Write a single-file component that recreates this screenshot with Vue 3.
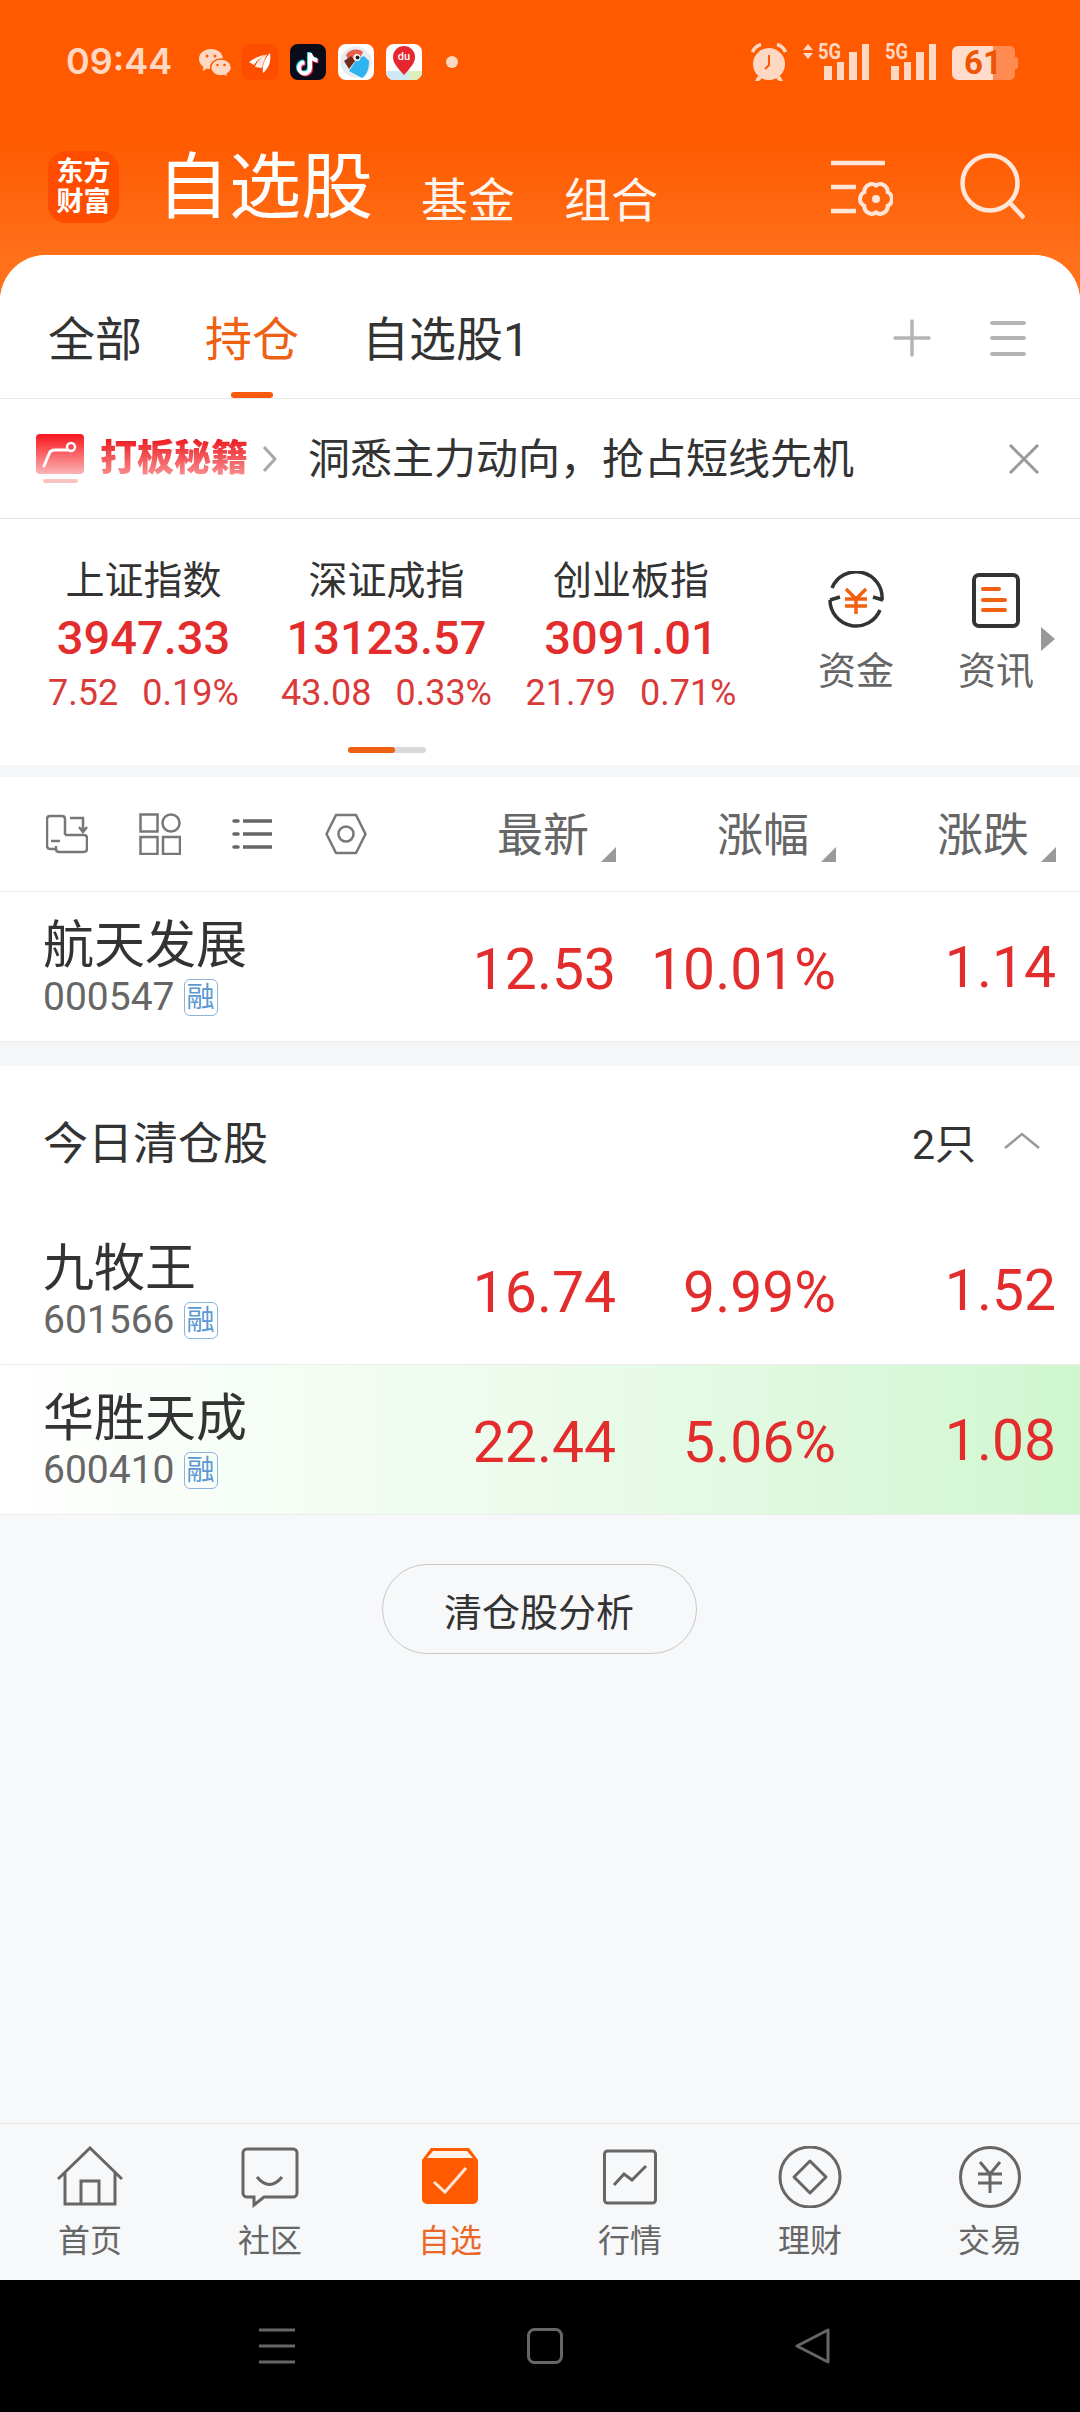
<template>
<div class="page">
    <header class="hero">
        <div class="status">
            <span class="time">09:44</span>
            <svg class="wechat" viewBox="0 0 34 30" width="34" height="30">
                <path d="M13 1C6 1 1 5.400 1 11c0 3.200 1.700 6 4.400 7.800L4.600 23l4.300-2.400c1.300.4 2.700.6 4.100.6 7 0 12-4.600 12-10.200S20 1 13 1z" fill="#ffd8c4"/>
                <path d="M23 11c-5.800 0-10.400 3.900-10.400 8.500S17.200 28 23 28c1.100 0 2.200-.2 3.200-.5l3.800 2-.8-3.500c2.600-1.600 4.300-3.900 4.300-6.500C33.500 14.900 28.800 11 23 11z" fill="#ffd8c4" stroke="#ff5a00" stroke-width="1.500"/>
                <circle cx="9" cy="8" r="1.500" fill="#ff5a00"/>
                <circle cx="17" cy="8" r="1.500" fill="#ff5a00"/>
                <circle cx="19.500" cy="17" r="1.300" fill="#ff5a00"/>
                <circle cx="26.500" cy="17" r="1.300" fill="#ff5a00"/>
            </svg>
            <svg class="tile" viewBox="0 0 36 36" width="36" height="36">
                <rect width="36" height="36" rx="8" fill="#ff4d00"/>
                <path d="M7 18c5-4 10-6 16-7-4 2-8 5-11 10z" fill="#fff"/>
                <path d="M13 23c2-6 6-10 12-13-2 4-4 9-5 14z" fill="#ffe9df"/>
                <path d="M21 29c-1-7 1-14 7-20 1 7 0 14-7 20z" fill="#fff"/>
            </svg>
            <svg class="tile" viewBox="0 0 36 36" width="36" height="36">
                <rect width="36" height="36" rx="8" fill="#0b0c1a"/>
                <path d="M19 8v15a5.500 5.500 0 1 1-5.500-5.500M19 9c1 4 4 6 7.500 6.500" fill="none" stroke="#25e3ea" stroke-width="4"/>
                <path d="M21 10v15a5.500 5.500 0 1 1-5.500-5.500M21 11c1 4 4 6 7.500 6.500" fill="none" stroke="#f5305c" stroke-width="4"/>
                <path d="M20 9v15a5.500 5.500 0 1 1-5.500-5.500M20 10c1 4 4 6 7.500 6.500" fill="none" stroke="#fff" stroke-width="4"/>
            </svg>
            <svg class="tile" viewBox="0 0 36 36" width="36" height="36">
                <rect width="36" height="36" rx="8" fill="#fff"/>
                <circle cx="18" cy="18" r="15.500" fill="#e6ebef"/>
                <path d="M8 11c4-6 12-7 17-3l-4 8-9 3z" fill="#e8604c"/>
                <path d="M6 17l7-5 4 5-6 8z" fill="#6e2a1c"/>
                <path d="M11 27l8-12 7-3 5 5c0 9-3 15-7 17z" fill="#2eb4ee"/>
                <circle cx="19" cy="13.500" r="3.500" fill="#fff"/>
                <circle cx="19.500" cy="13.500" r="2" fill="#1d2430"/>
            </svg>
            <svg class="tile" viewBox="0 0 36 36" width="36" height="36">
                <rect width="36" height="36" rx="8" fill="#fff"/>
                <path d="M0 27h36v1a8 8 0 0 1-8 8H8a8 8 0 0 1-8-8z" fill="#cfe8f6"/>
                <path d="M23 27h13v1a8 8 0 0 1-8 8h-5z" fill="#dcefb8"/>
                <path d="M18 31C11 23 7 19 7 13a11 11 0 0 1 22 0c0 6-4 10-11 18z" fill="#e8262f"/>
                <text x="18" y="16" text-anchor="middle" class="du">du</text>
            </svg>
            <span class="dot"></span>

            <div class="status-right">
                <svg viewBox="0 0 36 38" width="36" height="38">
                    <circle cx="18" cy="21" r="16" fill="#ffd8c4"/>
                    <path d="M1.500 9Q4 3 10 1.500M34.500 9Q32 3 26 1.500" fill="none" stroke="#ffd8c4" stroke-width="3.500"/>
                    <path d="M7 33l-3 5h4l3-3zM29 33l3 5h-4l-3-3z" fill="#ffd8c4"/>
                    <path d="M18 12v10l-4 4" fill="none" stroke="#ff5a00" stroke-width="2"/>
                </svg>
                <svg class="signal" viewBox="0 -6 66 44" width="66" height="44">
                    <path d="M5 1l5 6H0zM0 10h10l-5 6z" fill="#ffd8c4"/>
                    <text x="15" y="16" class="five-g" textLength="23" lengthAdjust="spacingAndGlyphs">5G</text>
                    <rect x="21" y="23" width="8" height="14" fill="#ffd8c4"/>
                    <rect x="34" y="19" width="7" height="18" fill="#ffd8c4"/>
                    <rect x="46" y="9" width="8" height="28" fill="#ffd8c4"/>
                    <rect x="59" y="1" width="7" height="36" fill="#ffd8c4"/>
                </svg>
                <svg class="signal" viewBox="0 -6 51 44" width="51" height="44">
                    <text x="0" y="16" class="five-g" textLength="23" lengthAdjust="spacingAndGlyphs">5G</text>
                    <rect x="6" y="23" width="8" height="14" fill="#ffd8c4"/>
                    <rect x="19" y="19" width="7" height="18" fill="#ffd8c4"/>
                    <rect x="31" y="9" width="8" height="28" fill="#ffd8c4"/>
                    <rect x="44" y="1" width="7" height="36" fill="#ffd8c4"/>
                </svg>
                <svg class="battery" viewBox="0 -4 66 44" width="66" height="44">
                    <path d="M58 0a5 5 0 0 1 5 5v24a5 5 0 0 1-5 5H40V0z" fill="#ff8a52"/>
                    <path d="M6 0h35v34H6a6 6 0 0 1-6-6V6a6 6 0 0 1 6-6z" fill="#ffdccb"/>
                    <path d="M63 11h1a2 2 0 0 1 2 2v8a2 2 0 0 1-2 2h-1z" fill="#ff8a52"/>
                    <text x="31" y="28" text-anchor="middle" class="batt-num">61</text>
                </svg>
            </div>
        </div>

        <div class="title-row">
            <div class="logo">
                <span>东方</span>
                <span>财富</span>
            </div>
            <div class="titles">
                <span class="title-main">自选股</span>
                <span class="title-sub">基金</span>
                <span class="title-sub">组合</span>
            </div>
            <svg class="settings" viewBox="0 0 62 62" width="62" height="62" fill="none" stroke="#ffe6d8" stroke-width="4.500">
                <path d="M0 3h54M0 27h25M0 51h25"/>
                <path transform="translate(45 39)" stroke-width="4" d="M0-13.500A7.500 7.500 0 0 1 11.700-6.750A7.500 7.500 0 0 1 11.700 6.750A7.500 7.500 0 0 1 0 13.500A7.500 7.500 0 0 1-11.700 6.750A7.500 7.500 0 0 1-11.700-6.750A7.500 7.500 0 0 1 0-13.500Z"/>
                <circle cx="45" cy="39" r="4" fill="#ffe6d8" stroke="none"/>
            </svg>
            <svg class="search" viewBox="0 0 67 67" width="67" height="67" fill="none" stroke="#ffe6d8" stroke-width="4.500">
                <circle cx="32" cy="30" r="27.500"/>
                <path d="M52 50l14 15"/>
            </svg>
        </div>
    </header>

    <main class="panel">
        <div class="tabs">
            <div v-for="tab in tabs" :key="tab" class="tab" :class="{ active: tab === '持仓' }">
                <span class="tab-text">{{ tab }}</span>
                <span class="tab-line"></span>
            </div>
            <div class="tab-tools">
                <svg viewBox="0 0 38 38" width="38" height="38" stroke="#b4b4b4" stroke-width="3.500" stroke-linecap="round">
                    <path d="M19 2v34M2 19h34"/>
                </svg>
                <svg viewBox="0 0 36 38" width="36" height="38" stroke="#b4b4b4" stroke-width="4" stroke-linecap="round">
                    <path d="M2 4h32M2 19h32M2 35h32"/>
                </svg>
            </div>
        </div>

        <div class="banner">
            <svg viewBox="0 0 48 50" width="48" height="50">
                <defs>
                    <linearGradient id="bannerRed" x1="0" y1="0" x2="0" y2="1">
                        <stop offset="0" stop-color="#f8141c"/>
                        <stop offset="1" stop-color="#fbb4b4"/>
                    </linearGradient>
                </defs>
                <rect width="48" height="40" rx="4" fill="url(#bannerRed)"/>
                <rect x="7" y="45" width="35" height="4" rx="2" fill="#fbc4c4"/>
                <path d="M8 32l5-12c1-3 3-4 6-4h12" fill="none" stroke="#fff" stroke-width="3" stroke-linecap="round"/>
                <circle cx="35" cy="13" r="4" fill="none" stroke="#fff" stroke-width="2.500"/>
            </svg>
            <span class="banner-tag">打板秘籍</span>
            <svg class="banner-arrow" viewBox="0 0 14 26" width="14" height="26" fill="none" stroke="#a8a8a8" stroke-width="3">
                <path d="M1 1l11 12L1 25"/>
            </svg>
            <span class="banner-text">洞悉主力动向，抢占短线先机</span>
            <svg class="banner-close" viewBox="0 0 32 30" width="32" height="30" stroke="#999" stroke-width="3">
                <path d="M2 1l28 28M30 1L2 29"/>
            </svg>
        </div>

        <section class="indexes">
            <div class="index-row">
                <div v-for="item in indexes" :key="item.name" class="index">
                    <div class="index-name">{{ item.name }}</div>
                    <div class="index-value">{{ item.value }}</div>
                    <div class="index-sub">
                        <span>{{ item.change }}</span>
                        <span>{{ item.percent }}</span>
                    </div>
                </div>
                <div class="tool first">
                    <svg viewBox="0 0 58 58" width="58" height="58" fill="none" stroke="#333" stroke-width="3.500">
                        <path d="M5 17A26 26 0 0 1 55 29M46 26l10 3M3 29A26 26 0 0 0 53 39M3 29l10-3"/>
                        <path d="M19 18l10 10 10-10M18 28h22M18 35h22M29 28v15" stroke="#f0600f"/>
                    </svg>
                    <span>资金</span>
                </div>
                <div class="tool">
                    <svg viewBox="0 0 48 58" width="48" height="58" fill="none">
                        <rect x="2" y="4" width="44" height="51" rx="5" stroke="#333" stroke-width="4"/>
                        <path d="M11 18h16M11 29h22M11 39h22" stroke="#f0600f" stroke-width="4" stroke-linecap="round"/>
                    </svg>
                    <span>资讯</span>
                </div>
            </div>
            <div class="scroll-track"><div class="scroll-thumb"></div></div>
            <span class="more-arrow"></span>
        </section>

        <div class="band"></div>

        <div class="list-head">
            <div class="head-icons">
                <svg viewBox="0 0 42 42" width="42" height="42" fill="none" stroke="#777" stroke-width="2.500">
                    <path d="M19 22V6Q19 3 16 3H4Q1 3 1 6V33Q1 36 4 36H10M5 28h9"/>
                    <path d="M19 22H38Q41 22 41 25V36Q41 39 38 39H13Q10 39 10 36V33"/>
                    <path d="M24 5H37V18M33 14l4 5 4-5"/>
                </svg>
                <svg viewBox="0 0 42 42" width="42" height="42" fill="none" stroke="#777" stroke-width="2.500">
                    <rect x="1.500" y="1.500" width="17" height="17"/>
                    <circle cx="32" cy="10" r="8.500"/>
                    <rect x="1.500" y="24" width="17" height="17"/>
                    <rect x="24" y="24" width="17" height="17"/>
                </svg>
                <svg viewBox="0 0 42 42" width="42" height="42" fill="none" stroke="#666" stroke-width="3.500">
                    <path d="M11 8h29M11 21h29M11 34h29"/>
                    <path d="M2 8h4M2 21h4M2 34h4" stroke-linecap="round"/>
                </svg>
                <svg viewBox="0 0 42 42" width="42" height="42" fill="none" stroke="#777" stroke-width="2.500" stroke-linejoin="round">
                    <path d="M1.500 21L11 2h20l9.500 19L31 40H11z"/>
                    <circle cx="21" cy="21" r="7.500"/>
                </svg>
            </div>
            <div v-for="col in columns" :key="col" class="head-cell">{{ col }}<i class="corner"></i></div>
        </div>

        <div class="quote-row">
            <div class="stock">
                <div class="stock-name">{{ held.name }}</div>
                <div class="stock-code">{{ held.code }}<span class="badge">融</span></div>
            </div>
            <div class="num">{{ held.price }}</div>
            <div class="num">{{ held.percent }}</div>
            <div class="num change">{{ held.change }}</div>
        </div>

        <div class="band wide"></div>

        <div class="section-head">
            <span>今日清仓股</span>
            <div class="section-count">
                <span>2只</span>
                <svg viewBox="0 0 36 18" width="36" height="18" fill="none" stroke="#999" stroke-width="2.500">
                    <path d="M1 16L18 2l17 14"/>
                </svg>
            </div>
        </div>

        <div v-for="row in cleared" :key="row.code" class="quote-row" :class="{ flash: row.flash }">
            <div class="stock">
                <div class="stock-name">{{ row.name }}</div>
                <div class="stock-code">{{ row.code }}<span class="badge">融</span></div>
            </div>
            <div class="num">{{ row.price }}</div>
            <div class="num">{{ row.percent }}</div>
            <div class="num change">{{ row.change }}</div>
        </div>

        <div class="analysis">
            <button class="analysis-btn">清仓股分析</button>
        </div>
    </main>

    <nav class="tabbar">
        <div class="tabbar-item">
            <svg viewBox="0 0 66 62" width="66" height="62" fill="none" stroke="#666" stroke-width="3">
                <path d="M1 33L33 2l32 31M8 27v31h50V27M24 58V35h18v23"/>
            </svg>
            <span>首页</span>
        </div>
        <div class="tabbar-item">
            <svg viewBox="0 0 58 62" width="58" height="62" fill="none" stroke="#666" stroke-width="3">
                <path d="M6 3H52a4 4 0 0 1 4 4V47a4 4 0 0 1-4 4H23L13 59V51H6a4 4 0 0 1-4-4V7a4 4 0 0 1 4-4z"/>
                <path d="M16 31Q28.500 46 41 31"/>
            </svg>
            <span>社区</span>
        </div>
        <div class="tabbar-item active">
            <svg viewBox="0 0 58 62" width="58" height="62">
                <path d="M10 2H48L57 14V53a5 5 0 0 1-5 5H6a5 5 0 0 1-5-5V14z" fill="#ff5a00"/>
                <path d="M12 5H46L52 12H6z" fill="#fff3ec"/>
                <path d="M13 36l11 10 21-24" fill="none" stroke="#ffe6d8" stroke-width="3"/>
            </svg>
            <span>自选</span>
        </div>
        <div class="tabbar-item">
            <svg viewBox="0 0 54 62" width="54" height="62" fill="none" stroke="#666" stroke-width="3">
                <rect x="1.500" y="5" width="51" height="52" rx="3"/>
                <path d="M11 39l10-11 8 6 14-14"/>
            </svg>
            <span>行情</span>
        </div>
        <div class="tabbar-item">
            <svg viewBox="0 0 64 62" width="64" height="62" fill="none" stroke="#666" stroke-width="3">
                <circle cx="32" cy="31" r="30"/>
                <path d="M32 15L48 31 32 47 16 31z" stroke-linejoin="round"/>
            </svg>
            <span>理财</span>
        </div>
        <div class="tabbar-item">
            <svg viewBox="0 0 62 62" width="62" height="62" fill="none" stroke="#666" stroke-width="3">
                <circle cx="31" cy="31" r="29.500"/>
                <path d="M21 16l10 12 10-12M19 28h24M19 37h24M31 28v19"/>
            </svg>
            <span>交易</span>
        </div>
    </nav>

    <div class="system-nav">
        <svg viewBox="0 0 36 36" width="36" height="36" stroke="#666" stroke-width="3">
            <path d="M0 2h36M0 18h36M0 34h36"/>
        </svg>
        <svg viewBox="0 0 36 36" width="36" height="36" fill="none" stroke="#666" stroke-width="3">
            <rect x="1.500" y="1.500" width="33" height="33" rx="6"/>
        </svg>
        <svg viewBox="0 0 36 36" width="36" height="36" fill="none" stroke="#666" stroke-width="3" stroke-linejoin="round">
            <path d="M33 2v32L2 18z"/>
        </svg>
    </div>
</div>
</template>

<script setup>
const tabs = ['全部', '持仓', '自选股1'];

const indexes = [
    { name: '上证指数', value: '3947.33', change: '7.52', percent: '0.19%' },
    { name: '深证成指', value: '13123.57', change: '43.08', percent: '0.33%' },
    { name: '创业板指', value: '3091.01', change: '21.79', percent: '0.71%' }
];

const columns = ['最新', '涨幅', '涨跌'];

const held = { name: '航天发展', code: '000547', price: '12.53', percent: '10.01%', change: '1.14' };

const cleared = [
    { name: '九牧王', code: '601566', price: '16.74', percent: '9.99%', change: '1.52' },
    { name: '华胜天成', code: '600410', price: '22.44', percent: '5.06%', change: '1.08', flash: true }
];
</script>

<style>
body {
    margin: 0;
    background: #f7f8fa;
}
</style>

<style scoped>
.page {
    width: 1080px;
    height: 2412px;
    overflow: hidden;
    display: flex;
    flex-direction: column;
    background: #f7f8fa;
    color: #333;
    font-family: Roboto, "Noto Sans CJK SC", sans-serif;
}

.hero {
    height: 301px;
    margin-bottom: -46px;
    background: linear-gradient(180deg, #ff5a00 0, #ff5a00 140px, #ff7019 255px);
}

.status {
    height: 151px;
    box-sizing: border-box;
    padding: 43px 62px 0 66px;
    display: flex;
    align-items: flex-start;
}

.time {
    font-family: Inter, sans-serif;
    font-size: 36px;
    font-weight: 600;
    line-height: 36px;
    color: #ffd8c4;
    margin-right: 26px;
}

.wechat {
    margin: 5px 10px 0 0;
}

.tile {
    margin: 1px 12px 0 0;
}

.du {
    font-family: Roboto, sans-serif;
    font-size: 11px;
    font-weight: 500;
    fill: #fff;
}

.dot {
    width: 12px;
    height: 12px;
    border-radius: 50%;
    background: #ffd8c4;
    margin: 13px 0 0 12px;
}

.status-right {
    margin-left: auto;
    display: flex;
    align-items: flex-start;
    gap: 16px;
}

.signal {
    margin-top: -6px;
}

.five-g {
    font-family: Roboto, sans-serif;
    font-size: 22px;
    font-weight: 700;
    fill: #ffd8c4;
}

.battery {
    margin-top: -1px;
}

.batt-num {
    font-family: Roboto, sans-serif;
    font-size: 33px;
    font-weight: 700;
    fill: #ee5505;
}

.title-row {
    display: flex;
    align-items: flex-start;
    padding-left: 48px;
}

.logo {
    width: 71px;
    height: 72px;
    border-radius: 18px;
    background: #ff4d00;
    display: flex;
    flex-direction: column;
    align-items: center;
    justify-content: center;
    color: #fff;
    font-size: 27px;
    font-weight: 700;
    line-height: 30px;
}

.titles {
    display: flex;
    align-items: flex-end;
    color: #fff;
    margin-left: 38px;
}

.title-main {
    font-size: 72px;
    line-height: 73px;
    margin-right: 48px;
}

.title-sub {
    font-size: 47px;
    line-height: 47px;
    color: #fff5ef;
    margin-right: 49px;
}

.settings {
    position: relative;
    top: 9px;
    margin-left: 124px;
}

.search {
    position: relative;
    top: 2px;
    margin-left: 65px;
}

.panel {
    position: relative;
    flex: 1;
    display: flex;
    flex-direction: column;
    background: #f7f8fa;
    border-radius: 46px 46px 0 0;
    overflow: hidden;
}

.tabs {
    height: 144px;
    box-sizing: border-box;
    background: #fff;
    border-bottom: 1px solid #e8e8e8;
    padding-left: 48px;
    display: flex;
    align-items: flex-start;
    gap: 63px;
}

.tab {
    display: flex;
    flex-direction: column;
    align-items: center;
    padding-top: 62px;
}

.tab-text {
    font-size: 47px;
    line-height: 46px;
}

.tab-line {
    width: 42px;
    height: 6px;
    margin-top: 29px;
    border-radius: 3px;
}

.tab.active .tab-text {
    color: #ee6012;
}

.tab.active .tab-line {
    background: #f8590a;
}

.tab-tools {
    margin: 64px 54px 0 auto;
    display: flex;
    gap: 59px;
}

.banner {
    height: 120px;
    box-sizing: border-box;
    background: #fff;
    border-bottom: 1px solid #e6e6e6;
    padding: 0 40px 0 36px;
    display: flex;
    align-items: center;
}

.banner-tag {
    margin-left: 16px;
    font-size: 37px;
    font-weight: 900;
    line-height: 40px;
    background: linear-gradient(180deg, #ee1c22, #f99a9a);
    -webkit-background-clip: text;
    background-clip: text;
    color: transparent;
}

.banner-arrow {
    margin-left: 15px;
}

.banner-text {
    margin-left: 31px;
    font-size: 42px;
    line-height: 42px;
    position: relative;
    top: 1px;
}

.banner-close {
    margin-left: auto;
}

.indexes {
    position: relative;
    height: 246px;
    background: #fff;
}

.index-row {
    display: flex;
    align-items: flex-start;
    padding-left: 22px;
}

.index {
    width: 243px;
    padding-top: 43px;
    display: flex;
    flex-direction: column;
    align-items: center;
}

.index:nth-child(3) {
    padding-left: 3px;
    width: 240px;
}

.index-name {
    font-size: 39px;
    line-height: 38px;
}

.index-value {
    margin-top: 14px;
    font-size: 47px;
    font-weight: 500;
    line-height: 48px;
    color: #e32d2d;
}

.index-sub {
    margin-top: 13px;
    display: flex;
    gap: 24px;
    font-size: 36px;
    line-height: 36px;
    color: #d93a3a;
}

.tool {
    width: 140px;
    padding-top: 52px;
    display: flex;
    flex-direction: column;
    align-items: center;
    font-size: 38px;
    line-height: 38px;
    color: #666;
}

.tool.first {
    margin-left: 35px;
}

.tool span {
    margin-top: 23px;
}

.scroll-track {
    width: 78px;
    height: 6px;
    margin: 36px 0 0 348px;
    border-radius: 3px;
    background: #d9d9d9;
}

.scroll-thumb {
    width: 47px;
    height: 6px;
    border-radius: 3px;
    background: #ee5f12;
}

.more-arrow {
    position: absolute;
    left: 1041px;
    top: 108px;
    width: 14px;
    height: 24px;
    background: #999;
    clip-path: polygon(0 0, 100% 50%, 0 100%);
}

.band {
    height: 12px;
    background: #f5f6f8;
}

.band.wide {
    height: 24px;
}

.list-head {
    height: 115px;
    box-sizing: border-box;
    background: #fff;
    border-bottom: 1px solid #ececec;
    padding-right: 24px;
    display: grid;
    grid-template-columns: 396px 220px 220px 220px;
    align-items: center;
}

.head-icons {
    display: flex;
    gap: 51px;
    padding-left: 46px;
}

.head-cell {
    position: relative;
    top: 1px;
    text-align: right;
    padding-right: 27px;
    font-size: 46px;
    line-height: 46px;
    color: #666;
}

.corner {
    position: absolute;
    right: 0;
    bottom: -4px;
    width: 15px;
    height: 15px;
    background: #9a9a9a;
    clip-path: polygon(100% 0, 100% 100%, 0 100%);
}

.quote-row {
    height: 150px;
    box-sizing: border-box;
    background: #fff;
    border-bottom: 1px solid #ececec;
    padding-right: 24px;
    display: grid;
    grid-template-columns: 396px 220px 220px 220px;
    align-items: center;
}

.quote-row.flash {
    background: linear-gradient(90deg, #fff 0%, #ecfbec 50%, #cff7cf 100%);
}

.stock {
    padding: 4px 0 0 43px;
}

.stock-name {
    font-size: 51px;
    line-height: 51px;
}

.stock-code {
    margin-top: 7px;
    display: flex;
    align-items: center;
    gap: 9px;
    font-size: 39px;
    line-height: 39px;
    color: #666;
}

.badge {
    width: 34px;
    height: 37px;
    box-sizing: border-box;
    border: 1.5px solid #8db4dc;
    border-radius: 6px;
    display: flex;
    align-items: center;
    justify-content: center;
    font-size: 28px;
    line-height: 28px;
    color: #5b98d2;
}

.num {
    text-align: right;
    padding-top: 6px;
    font-size: 57px;
    line-height: 56px;
    color: #e32d2d;
}

.num.change {
    padding-top: 2px;
}

.section-head {
    height: 149px;
    box-sizing: border-box;
    background: #fff;
    padding: 0 40px 0 43px;
    display: flex;
    align-items: center;
    justify-content: space-between;
    font-size: 45px;
}

.section-count {
    display: flex;
    align-items: center;
    gap: 28px;
    font-size: 41px;
}

.analysis {
    padding: 49px 2px 0 0;
    display: flex;
    justify-content: center;
}

.analysis-btn {
    width: 315px;
    height: 90px;
    border: 1.5px solid #c8c8c8;
    border-radius: 45px;
    background: transparent;
    font-family: inherit;
    font-size: 38px;
    color: #333;
}

.tabbar {
    height: 157px;
    box-sizing: border-box;
    border-top: 1px solid #e4e4e4;
    background: #f7f8fa;
    padding-top: 22px;
    display: flex;
}

.tabbar-item {
    flex: 1;
    display: flex;
    flex-direction: column;
    align-items: center;
    font-size: 32px;
    line-height: 32px;
    color: #666;
}

.tabbar-item span {
    margin-top: 17px;
}

.tabbar-item.active {
    color: #e8692a;
}

.system-nav {
    height: 132px;
    background: #000;
    padding-left: 259px;
    display: flex;
    align-items: center;
    gap: 232px;
}
</style>
